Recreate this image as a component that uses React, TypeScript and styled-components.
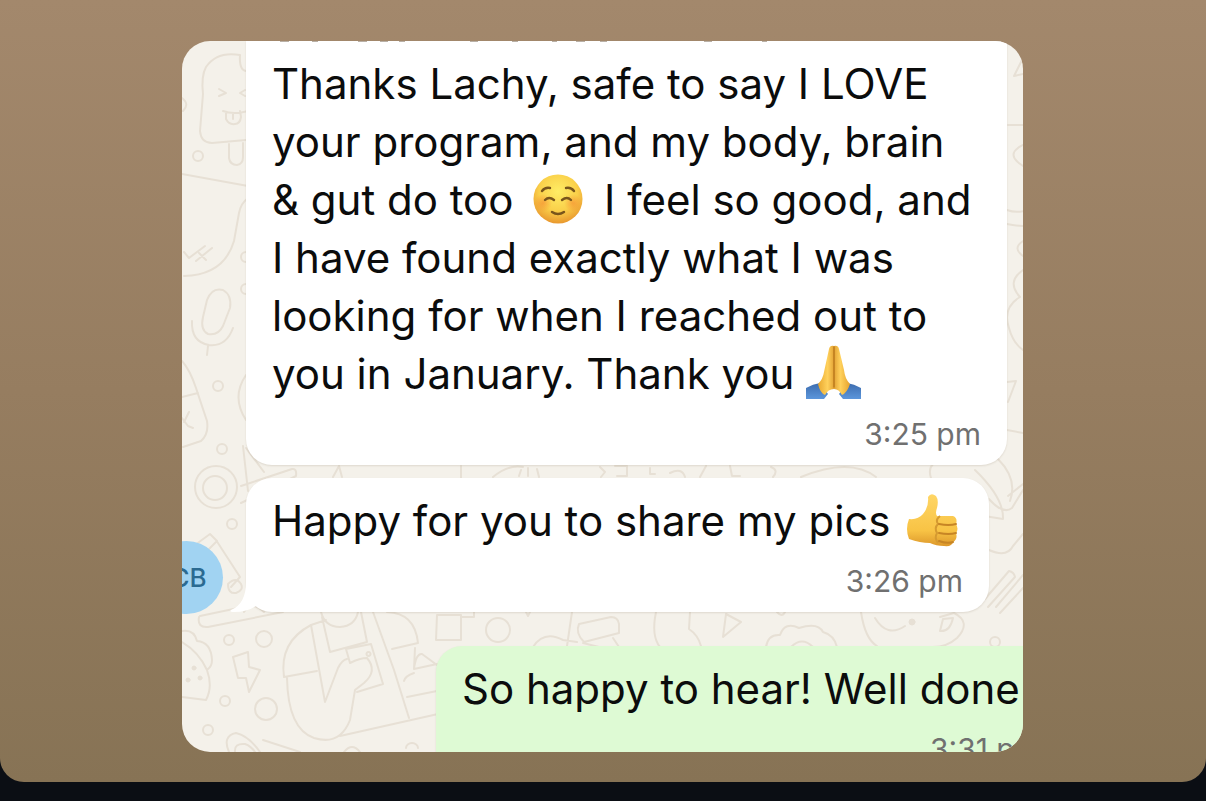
import React from "react";
import styled, { createGlobalStyle } from "styled-components";

const GlobalStyle = createGlobalStyle`
  * { box-sizing: border-box; }
  body {
    margin: 0;
    background: #0b0e14;
    font-family: Inter, "Liberation Sans", sans-serif;
  }
`;

const Panel = styled.main`
  padding: 41px 183px 30px 182px;
  border-radius: 0 0 24px 24px;
  background: linear-gradient(#a3886c, #967d60 50%, #877355);
  overflow: hidden;
`;

const Chat = styled.section`
  position: relative;
  display: flex;
  flex-direction: column;
  border-radius: 28px;
  background: #f4f1ea;
  overflow: hidden;
`;

const Wallpaper = styled.svg`
  position: absolute;
  inset: 0;
  width: 100%;
  height: 100%;
  fill: none;
  stroke: #e7e0d5;
  stroke-width: 2;
  stroke-linecap: round;
  stroke-linejoin: round;
`;

const Row = styled.div<{ $gap?: number; $left?: number; $right: number; $height?: number }>`
  position: relative;
  margin-top: ${(p) => p.$gap ?? 0}px;
  padding-left: ${(p) => p.$left ?? 64}px;
  margin-right: ${(p) => p.$right}px;
  height: ${(p) => (p.$height ? `${p.$height}px` : "auto")};
`;

const Bubble = styled.article<{ $sent?: boolean; $continued?: boolean }>`
  padding: 14px 26px 13px;
  border-radius: ${(p) => (p.$continued ? "0 0 26px 26px" : "26px")};
  background: ${(p) => (p.$sent ? "#defad4" : "#ffffff")};
  box-shadow: 0 1px 2px rgba(90, 70, 40, 0.14);
`;

const Message = styled.p`
  margin: 0;
  color: #0b0c0c;
  font-size: 42px;
  line-height: 58px;
  white-space: nowrap;
`;

const Time = styled.time`
  display: block;
  margin-top: 13px;
  color: #707070;
  font-size: 30px;
  line-height: 36px;
  text-align: right;
  white-space: nowrap;
`;

const Avatar = styled.div`
  position: absolute;
  left: -32px;
  bottom: -2px;
  width: 73px;
  height: 73px;
  padding-left: 4px;
  border-radius: 50%;
  background: #a1d3f2;
  color: #2b6a91;
  font-size: 26px;
  font-weight: 500;
  line-height: 73px;
  text-align: center;
`;

const Tail = styled.svg`
  position: absolute;
  left: 48px;
  bottom: 0;
  width: 48px;
  height: 44px;
  fill: #ffffff;
`;

const ScrolledLine = styled.svg`
  position: absolute;
  top: 0;
  left: 94px;
  width: 540px;
  height: 2px;
  stroke: #b9b0a6;
  stroke-width: 2;
`;

const Emoji = styled.svg<{ $size: number; $drop: number; $space?: number }>`
  width: ${(p) => p.$size}px;
  height: ${(p) => p.$size}px;
  margin: -10px ${(p) => p.$space ?? 0}px 0;
  vertical-align: ${(p) => -p.$drop}px;
`;

function Doodles() {
  return (
    <Wallpaper viewBox="182 41 841 711" preserveAspectRatio="xMinYMin slice" aria-hidden="true">
      <path d="M246 71 Q239 70 240 55 Q217 51 206 67 Q201 76 203 94 L200 131 Q201 143 212 143 L246 140" />
      <path d="M219 89 l7 4 -7 3 M245 90 l-5 3 5 3 M223 111 q11 4 25 0 M226 112 v7 q3 6 9 5 q5 0 6 -7 l-1 -6 M233 113 v6" />
      <path d="M229 144 v14 q1 7 8 7 q6 -1 6 -8 v-14 M182 98 q8 6 1 13" />
      <circle cx="198" cy="156" r="5" />
      <path d="M182 174 L248 186 M248 198 Q241 203 239 213 L234 241 Q224 275 184 276" />
      <path d="M184 252 l5 6 16 -12 M196 261 l16 -13 M199 253 l7 7" />
      <path d="M207 300 Q212 287 223 290 Q232 295 230 308 L223 326 Q218 336 208 334 Q200 330 203 317 Z M192 321 Q191 342 209 345 Q226 347 233 328 M208 346 l-1 9" />
      <circle cx="246" cy="257" r="5" />
      <circle cx="246" cy="289" r="5" />
      <circle cx="218" cy="386" r="5" />
      <circle cx="222" cy="449" r="5" />
      <path d="M182 361 Q190 370 196 388 L207 421 Q209 434 201 441 L183 447 M182 397 L198 393 M182 418 l6 8 5 2 M184 422 l5 -10 M246 375 Q231 397 246 420" />
      <circle cx="216" cy="487" r="21" />
      <circle cx="215" cy="488" r="12" />
      <path d="M241 486 L292 469 Q297 468 296 476 L241 503 M243 446 L248 491 M246 448 L264 472" />
      <circle cx="232" cy="524" r="5" />
      <path d="M333 477 l6 -11 3 11 M461 466 v12 M493 477 Q509 464 523 467 M519 476 l2 -6 M528 476 v-8 M539 477 l-2 -8 M600 467 l5 5 -4 5 M615 466 h12 v10 h-10 M650 468 v6 h5 M670 473 q12 -6 15 4 M706 466 l-6 11 M730 466 l2 10 8 0 M771 467 q8 3 2 10 M801 477 q49 -20 75 0 M931 478 q-3 -9 2 -14" />
      <path d="M195 545 l15 -11 7 7 -11 11 M216 540 L240 577 L231 587 M228 584 q8 -8 13 0 q3 6 -5 9 q-8 1 -8 -9 M244 612 q8 -12 20 0 M200 616 l57 -12 M199 617 Q197 628 208 627 L283 612" />
      <circle cx="229" cy="640" r="5" />
      <circle cx="264" cy="639" r="8" />
      <path d="M182 631 q12 -2 15 10 q14 1 15 19 q0 6 -4 9 M182 642 Q199 652 207 670 Q213 687 206 700 L182 697" />
      <g fill="#e7e0d5" strokeWidth="1">
        <circle cx="194" cy="668" r="2" />
        <circle cx="188" cy="680" r="2" />
        <circle cx="200" cy="678" r="2" />
        <circle cx="912" cy="622" r="3" />
      </g>
      <path d="M233 657 l15 -5 1 15 11 3 -11 22 -3 -14 -8 0 Z" />
      <circle cx="225" cy="701" r="5" />
      <circle cx="266" cy="709" r="11" />
      <circle cx="208" cy="730" r="5" />
      <path d="M229 752 q-7 -16 7 -19 Q249 736 260 752 M235 752 q-1 -9 10 -8 q6 2 10 8 M263 740 L300 752" />
      <path d="M284 677 Q279 642 311 625 L326 620 M284 677 L317 671 M311 625 L325 702 L338 668 Q342 660 347 659 M322 617 L330 652 L367 642 L361 612 M287 678 Q288 729 314 738 Q340 746 350 720 L355 690 L364 683 Q378 671 367 658 Q360 658 350 663 L346 649 L371 644 L383 684 L357 692 M321 612 q4 15 19 15 q15 -1 18 -15 M373 612 L394 670 L409 718 M387 612 q28 1 31 31 L392 649 M415 648 L414 669 L437 664 M414 669 q2 -16 8 -15 L437 665 M404 681 q1 -5 10 -8 M407 697 L437 691 M340 736 L438 714" />
      <path d="M368 652 a2 2 0 1 0 1 0 M344 752 q8 -10 16 0 M406 748 a6 5 0 1 1 12 0" />
      <path d="M437 615 h24 v25 h-25 Z M461 617 h13 v-5 M526 612 l2 4 2 -4" />
      <circle cx="498" cy="630" r="12" />
      <path d="M533 647 q11 -17 30 -7 l14 2 M572 612 l-5 34 M579 624 l32 -7 q7 0 8 7 v9 l-35 9 Q575 633 579 624 M583 643 l16 4 M613 638 l6 9 M656 612 q-5 24 4 35 M690 612 l-1 17 q9 6 12 17" />
      <path d="M726 614 l-3 23 18 -15 -15 -8 M766 647 q2 -13 14 -12 q5 -14 19 -7 q19 -6 24 4 q11 3 14 15 M791 647 q11 -11 22 0 M777 612 q5 6 8 0 M861 612 q4 27 16 34 M875 618 q12 20 30 8 M940 617 l14 -4 q18 9 3 25 -10 9 -24 9 M940 631 l3 -12 10 -1 q-3 14 -13 13" />
      <circle cx="995" cy="642" r="5" />
      <path d="M1023 58 l-9 18 9 -2 M1008 125 h16 M1023 145 q-19 9 0 21 M1007 210 q8 3 17 1 M1007 224 q9 2 17 2 M1023 241 q-11 7 0 15 M1023 270 q-17 12 -3 27 q-18 11 -11 31 q4 15 14 22 M1007 382 l9 -1 -8 21 M1007 430 l16 3 M998 459 q20 20 12 42 M1008 496 l15 -12 M975 470 q29 28 28 49 l-25 -4 M989 499 q14 16 23 9 l11 -18 M989 550 q18 8 24 -4 l10 -12 M985 599 L1009 571 q5 1 6 6 L988 607 M996 607 l27 -32 M1000 613 l23 -25" />
    </Wallpaper>
  );
}

function SmileEmoji() {
  return (
    <Emoji $size={51} $drop={10} $space={8} viewBox="0 0 51 51" role="img" aria-label="Smiling face">
      <defs>
        <radialGradient id="face" cx="50%" cy="35%" r="65%">
          <stop offset="0" stopColor="#ffed65" />
          <stop offset="0.6" stopColor="#fad04a" />
          <stop offset="1" stopColor="#e9982e" />
        </radialGradient>
        <radialGradient id="blush">
          <stop offset="0" stopColor="#f4772c" stopOpacity="0.5" />
          <stop offset="1" stopColor="#f4772c" stopOpacity="0" />
        </radialGradient>
      </defs>
      <circle cx="25" cy="25" r="24.5" fill="url(#face)" />
      <circle cx="10" cy="29" r="9" fill="url(#blush)" />
      <circle cx="40" cy="29" r="9" fill="url(#blush)" />
      <g fill="none" stroke="#79551b" strokeWidth="2.4" strokeLinecap="round">
        <path d="M9 17 Q12 13 17 14 M33 14 Q38 13 41 17" />
        <path d="M12 26 Q16 22 21 26 M29 26 Q34 22 38 26 M19 38 Q25 42 31 38" />
      </g>
    </Emoji>
  );
}

function PrayEmoji() {
  return (
    <Emoji $size={56} $drop={12} viewBox="0 0 56 56" role="img" aria-label="Folded hands">
      <defs>
        <linearGradient id="hands" x2="1">
          <stop offset="0" stopColor="#e8a72f" />
          <stop offset="0.3" stopColor="#ffd15c" />
          <stop offset="0.5" stopColor="#e3a335" />
          <stop offset="0.7" stopColor="#ffd15c" />
          <stop offset="1" stopColor="#e6a32d" />
        </linearGradient>
        <linearGradient id="sleeve" x2="0" y2="1">
          <stop offset="0" stopColor="#3d6cae" />
          <stop offset="1" stopColor="#5c96db" />
        </linearGradient>
      </defs>
      <path d="M0 43 Q7 39 14 38 L22 49 L18 54 H0 Z M55 43 Q48 39 41 38 L33 49 L37 54 H55 Z" fill="url(#sleeve)" />
      <path d="M23 4 Q24 0 28 1 Q32 0 33 4 L38 25 Q39 34 44 39 Q41 48 36 50 Q33 44 28 44 Q22 44 19 50 Q14 48 12 39 Q17 34 18 27 Z" fill="url(#hands)" />
      <path d="M28 2 V42" stroke="#bb7a1c" strokeWidth="1.5" strokeLinecap="round" />
    </Emoji>
  );
}

function ThumbEmoji() {
  return (
    <Emoji $size={55} $drop={12} $space={4} viewBox="0 0 55 55" role="img" aria-label="Thumbs up">
      <defs>
        <linearGradient id="thumb" x2="0" y2="1">
          <stop offset="0" stopColor="#ffd665" />
          <stop offset="0.7" stopColor="#f8c345" />
          <stop offset="1" stopColor="#dd982b" />
        </linearGradient>
      </defs>
      <path d="M22 4 Q25 -1 30 3 Q33 7 31 15 Q29 20 31 23 L47 23 Q52 25 50 31 Q53 36 50 40 Q52 46 47 49 Q46 54 38 53 Q30 53 24 50 Q14 50 3 46 Q-1 36 3 26 Q12 27 17 21 Q23 14 22 4 Z" fill="url(#thumb)" />
      <path d="M34 23 Q29 27 32 31 Q28 35 31 40 Q28 45 32 50" fill="none" stroke="#d59a31" strokeWidth="2" />
      <path d="M33 31 Q43 33 50 31 M33 40 Q43 42 50 40 M33 48 Q41 51 47 49" fill="none" stroke="#c78525" strokeWidth="2" strokeLinecap="round" />
    </Emoji>
  );
}

export default function App() {
  return (
    <>
      <GlobalStyle />
      <Panel>
        <Chat aria-label="Conversation">
          <Doodles />
          <Row $right={16}>
            <ScrolledLine viewBox="0 0 540 2" aria-hidden="true">
              <path d="M4 0 h9 M36 0 h6 M82 0 h9 M104 0 h8 M123 0 h6 M194 0 h8 M236 0 h6 M276 0 h5 M300 0 h9 M324 0 h7 M428 0 h8 M486 0 h5" />
            </ScrolledLine>
            <Bubble $continued>
              <Message>
                Thanks Lachy, safe to say I LOVE
                <br />
                your program, and my body, brain
                <br />
                &amp; gut do too <SmileEmoji /> I feel so good, and
                <br />
                I have found exactly what I was
                <br />
                looking for when I reached out to
                <br />
                you in January. Thank you <PrayEmoji />
              </Message>
              <Time>3:25 pm</Time>
            </Bubble>
          </Row>
          <Row $gap={13} $right={34}>
            <Avatar>CB</Avatar>
            <Tail viewBox="0 0 48 44" aria-hidden="true">
              <path d="M16 0 V14 Q16 36 1 42 Q-1 44 4 44 Q17 44 26 38 L48 44 V0 Z" />
            </Tail>
            <Bubble>
              <Message>
                Happy for you to share my pics <ThumbEmoji />
              </Message>
              <Time>3:26 pm</Time>
            </Bubble>
          </Row>
          <Row $gap={34} $left={254} $right={-44} $height={106}>
            <Bubble $sent>
              <Message>So happy to hear! Well done</Message>
              <Time>3:31 pm</Time>
            </Bubble>
          </Row>
        </Chat>
      </Panel>
    </>
  );
}
